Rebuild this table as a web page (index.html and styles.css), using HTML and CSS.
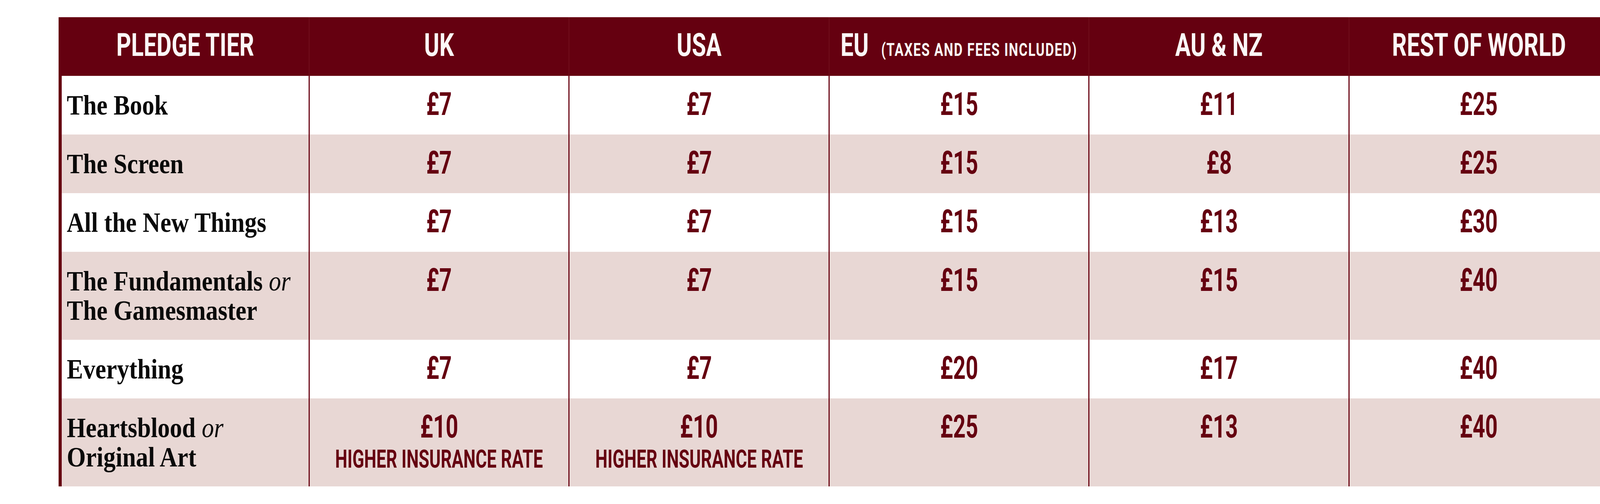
FILE: index.html
```html
<!DOCTYPE html>
<html lang="en">
<head>
<meta charset="utf-8">
<title>Pledge tier shipping</title>
<link rel="stylesheet" href="styles.css">
</head>
<body>
<div class="page">
  <div class="pricing">
    <div class="row head">
      <div class="cell tier"><span class="sq">PLEDGE TIER</span></div>
      <div class="cell"><span class="sq">UK</span></div>
      <div class="cell"><span class="sq">USA</span></div>
      <div class="cell"><span class="sq eu"><span>EU</span><span class="note">(TAXES AND FEES INCLUDED)</span></span></div>
      <div class="cell"><span class="sq">AU &amp; NZ</span></div>
      <div class="cell"><span class="sq">REST OF WORLD</span></div>
    </div>

    <div class="row">
      <div class="cell label"><span class="lab">The Book</span></div>
      <div class="cell price"><span class="sq">£7</span></div>
      <div class="cell price"><span class="sq">£7</span></div>
      <div class="cell price"><span class="sq">£15</span></div>
      <div class="cell price"><span class="sq">£11</span></div>
      <div class="cell price"><span class="sq">£25</span></div>
    </div>

    <div class="row alt">
      <div class="cell label"><span class="lab">The Screen</span></div>
      <div class="cell price"><span class="sq">£7</span></div>
      <div class="cell price"><span class="sq">£7</span></div>
      <div class="cell price"><span class="sq">£15</span></div>
      <div class="cell price"><span class="sq">£8</span></div>
      <div class="cell price"><span class="sq">£25</span></div>
    </div>

    <div class="row">
      <div class="cell label"><span class="lab">All the New Things</span></div>
      <div class="cell price"><span class="sq">£7</span></div>
      <div class="cell price"><span class="sq">£7</span></div>
      <div class="cell price"><span class="sq">£15</span></div>
      <div class="cell price"><span class="sq">£13</span></div>
      <div class="cell price"><span class="sq">£30</span></div>
    </div>

    <div class="row alt tall">
      <div class="cell label"><span class="lab">The Fundamentals <em>or</em><br>The Gamesmaster</span></div>
      <div class="cell price"><span class="sq">£7</span></div>
      <div class="cell price"><span class="sq">£7</span></div>
      <div class="cell price"><span class="sq">£15</span></div>
      <div class="cell price"><span class="sq">£15</span></div>
      <div class="cell price"><span class="sq">£40</span></div>
    </div>

    <div class="row">
      <div class="cell label"><span class="lab">Everything</span></div>
      <div class="cell price"><span class="sq">£7</span></div>
      <div class="cell price"><span class="sq">£7</span></div>
      <div class="cell price"><span class="sq">£20</span></div>
      <div class="cell price"><span class="sq">£17</span></div>
      <div class="cell price"><span class="sq">£40</span></div>
    </div>

    <div class="row alt tall">
      <div class="cell label"><span class="lab">Heartsblood <em>or</em><br>Original Art</span></div>
      <div class="cell price"><span class="sq">£10</span><span class="sq sub">HIGHER INSURANCE RATE</span></div>
      <div class="cell price"><span class="sq">£10</span><span class="sq sub">HIGHER INSURANCE RATE</span></div>
      <div class="cell price"><span class="sq">£25</span></div>
      <div class="cell price"><span class="sq">£13</span></div>
      <div class="cell price"><span class="sq">£40</span></div>
    </div>
  </div>
</div>
</body>
</html>
```
FILE: styles.css
```css
html, body {
  margin: 0;
  padding: 0;
  background: #ffffff;
}

.page {
  padding: 44px 0 0 150px;
}

.pricing {
  width: 3967px;
}

.row {
  display: grid;
  grid-template-columns: 640px repeat(5, minmax(0, 1fr));
  height: 150px;
  background: #ffffff;
}

.row.alt {
  background: #e8d7d4;
}

.row.tall {
  height: 225px;
}

.row.head {
  background: #650010;
}

.cell {
  box-sizing: border-box;
  min-width: 0;
  border-left: 3px solid #6d0a18;
  display: flex;
  flex-direction: column;
  align-items: center;
  padding-top: 35px;
  font-family: Roboto, "Liberation Sans", sans-serif;
  font-weight: 700;
  font-size: 82px;
  line-height: 75px;
  color: #650010;
  white-space: nowrap;
}

.row .cell:first-child {
  border-left: 8px solid #650010;
}

.head .cell {
  color: #fbf7f7;
  padding-top: 34px;
}

.sq {
  display: block;
  transform: scaleX(0.68);
  transform-origin: 50% 50%;
}

.head .sq {
  transform: scaleX(0.72);
}

.eu {
  display: flex;
  align-items: baseline;
}

.note {
  font-size: 47px;
  line-height: 75px;
  letter-spacing: 2.5px;
  margin-left: 44px;
}

.sub {
  font-size: 65px;
  line-height: 75px;
  margin-top: 8px;
}

.cell.label {
  align-items: flex-start;
  padding: 38px 0 0 13px;
  font-family: "Liberation Serif", "Times New Roman", serif;
  font-weight: 700;
  font-size: 71px;
  line-height: 75px;
  color: #0a0a0a;
}

.lab {
  display: block;
  transform: scaleX(0.88);
  transform-origin: 0 0;
}

.lab em {
  font-style: italic;
  font-weight: 400;
}
```
